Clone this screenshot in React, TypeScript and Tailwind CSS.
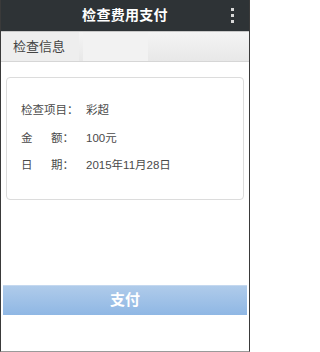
import React from 'react';

const rows = [
  { label: '检查项目：', value: '彩超' },
  { label: '金额：', value: '100元', spread: true },
  { label: '日期：', value: '2015年11月28日', spread: true },
];

const App: React.FC = () => {
  return (
    <div
      className="w-[250px] h-[352px] flex flex-col bg-white border-x border-b border-x-[#3a3a3a] border-b-[#9a9a9a] overflow-hidden"
      style={{ fontFamily: '"Liberation Sans", "Noto Sans CJK SC", sans-serif' }}
    >
      {/* Header */}
      <div className="relative h-[31px] bg-[#2e3336] flex items-center justify-center shrink-0">
        <span className="text-white text-[14px] font-bold tracking-[0.3px]">检查费用支付</span>
        <div className="absolute right-[15px] top-[8px] flex flex-col gap-[3px]">
          <span className="w-[3px] h-[3px] bg-[#d8d8d8]" />
          <span className="w-[3px] h-[3px] bg-[#d8d8d8]" />
          <span className="w-[3px] h-[3px] bg-[#d8d8d8]" />
        </div>
      </div>

      {/* Tab bar */}
      <div className="h-[31px] shrink-0 flex bg-gradient-to-b from-[#f4f4f4] to-[#e8e8e8] border-t border-t-[#c8c8c8] border-b border-b-[#d6d6d6]">
        <div className="w-[78px] flex items-center pl-[12px] text-[13px] text-[#444] bg-[#eeeeee]">检查信息</div>
        <div className="w-[65px] ml-[4px] bg-[#f2f2f2]" />
      </div>

      {/* Card */}
      <div className="mx-[5px] mt-[15px] h-[123px] border border-[#dcdcdc] rounded-[4px] flex flex-col justify-center gap-[13.5px] pl-[14px] text-[11.5px] text-[#4a4a4a]">
        {rows.map((r) => (
          <div key={r.label} className="flex items-center h-[14px]">
            {r.spread ? (
              <div className="w-[65px] flex justify-between pr-[12px]">
                <span>{r.label[0]}</span>
                <span>{r.label.slice(1)}</span>
              </div>
            ) : (
              <div className="w-[65px]">{r.label}</div>
            )}
            <span>{r.value}</span>
          </div>
        ))}
      </div>

      <div className="flex-1" />

      {/* Pay button */}
      <div className="mx-[2px] mb-[36px] h-[30px] bg-gradient-to-b from-[#afcbea] to-[#8fb7e4] border-t border-t-[#c4d8ef] flex items-center justify-center">
        <span className="text-white text-[15px] font-bold">支付</span>
      </div>
    </div>
  );
};

export default App;
